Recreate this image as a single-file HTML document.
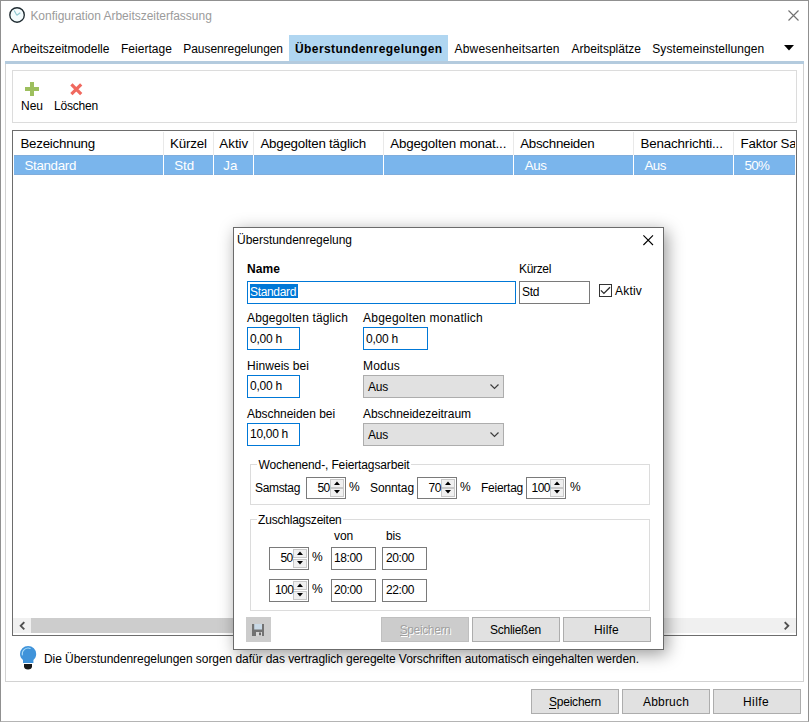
<!DOCTYPE html>
<html><head><meta charset="utf-8"><title>Konfiguration Arbeitszeiterfassung</title>
<style>
html,body{margin:0;padding:0;}
body{width:809px;height:722px;position:relative;overflow:hidden;background:#fff;font-family:'Liberation Sans', sans-serif;font-size:12px;color:#000;}
.t{position:absolute;white-space:pre;}
.b{position:absolute;box-sizing:border-box;}
svg{position:absolute;overflow:visible;}

.btn{background:#e1e1e1;border:1px solid #adadad;}
.inp{background:#fff;border:1px solid #7a7a7a;}
.inpf{background:#fff;border:1px solid #0078d7;}
.cmb{background:#e1e1e1;border:1px solid #adadad;}
.grp{border:1px solid #dcdcdc;}
.spb{background:#f0f0f0;border:1px solid #c8c8c8;}

</style></head><body>
<div class="b " style="left:0px;top:0px;width:809px;height:722px;border:1px solid #909090;border-bottom-color:#b4b4b4;"></div>
<div class="b " style="left:289px;top:35px;width:159px;height:27px;background:#b0d6f1;"></div>
<div class="b " style="left:5px;top:61px;width:799px;height:621px;border:1px solid #d2d2d2;"></div>
<div class="b " style="left:5px;top:61px;width:799px;height:3px;background:#b4cbde;"></div>
<div class="b " style="left:12px;top:70px;width:785px;height:53px;border:1px solid #dcdcdc;"></div>
<svg style="left:25px;top:82px" width="14" height="14"><path d="M5 0h4v5h5v4h-5v5h-4v-5h-5v-4h5z" fill="#9dbf5e"/></svg>
<svg style="left:69.700px;top:82.600px" width="12.600" height="12.600"><path d="M1.400 1.400L11.200 11.200M11.200 1.400L1.400 11.200" stroke="#f0695f" stroke-width="3.200" stroke-linecap="butt" fill="none"/></svg>
<div class="b " style="left:12px;top:130px;width:785px;height:506px;border:1px solid #6d6d6d;background:#fff;"></div>
<div class="b " style="left:14px;top:155px;width:781px;height:20px;background:#7ab5ec;border-top:1px solid #80addb;border-bottom:1px solid #80addb;"></div>
<div class="b " style="left:163px;top:132px;width:1px;height:23px;background:#e9e9e9;"></div>
<div class="b " style="left:163px;top:155px;width:1px;height:20px;background:#fff;"></div>
<div class="b " style="left:213px;top:132px;width:1px;height:23px;background:#e9e9e9;"></div>
<div class="b " style="left:213px;top:155px;width:1px;height:20px;background:#fff;"></div>
<div class="b " style="left:253px;top:132px;width:1px;height:23px;background:#e9e9e9;"></div>
<div class="b " style="left:253px;top:155px;width:1px;height:20px;background:#fff;"></div>
<div class="b " style="left:383px;top:132px;width:1px;height:23px;background:#e9e9e9;"></div>
<div class="b " style="left:383px;top:155px;width:1px;height:20px;background:#fff;"></div>
<div class="b " style="left:513px;top:132px;width:1px;height:23px;background:#e9e9e9;"></div>
<div class="b " style="left:513px;top:155px;width:1px;height:20px;background:#fff;"></div>
<div class="b " style="left:633px;top:132px;width:1px;height:23px;background:#e9e9e9;"></div>
<div class="b " style="left:633px;top:155px;width:1px;height:20px;background:#fff;"></div>
<div class="b " style="left:733px;top:132px;width:1px;height:23px;background:#e9e9e9;"></div>
<div class="b " style="left:733px;top:155px;width:1px;height:20px;background:#fff;"></div>
<div class="b " style="left:13px;top:618px;width:783px;height:15px;background:#f0f0f0;"></div>
<div class="b " style="left:31px;top:618px;width:610px;height:15px;background:#cdcdcd;"></div>
<svg style="left:18px;top:621px" width="8" height="10"><path d="M6.300 1.200L2.700 4.800L6.300 8.400" stroke="#505050" stroke-width="1.900" fill="none"/></svg>
<svg style="left:782px;top:621px" width="8" height="10"><path d="M2.700 1.200L6.300 4.800L2.700 8.400" stroke="#505050" stroke-width="1.900" fill="none"/></svg>
<svg style="left:19px;top:645px" width="18" height="26" viewBox="0 0 18 26"><path d="M9.100 1a8.100 8.100 0 0 0-8.100 8.100c0 2.600 1.300 4.400 3 6v2.800h10.400v-2.800c1.700-1.600 2.800-3.400 2.800-6a8.100 8.100 0 0 0-8.100-8.100z" fill="#3f93da"/><path d="M5 18.900h8v2.700c0 1.800-1.700 3-4 3s-4-1.200-4-3z" fill="#1a1a1a"/><path d="M3.300 9.900a6 6 0 0 1 7.900-6.500" stroke="#a9dcf9" stroke-width="1.100" fill="none" stroke-linecap="round"/></svg>
<div class="b btn" style="left:531px;top:689px;width:88px;height:25px;"></div>
<div class="b btn" style="left:622px;top:689px;width:88px;height:25px;"></div>
<div class="b btn" style="left:713px;top:689px;width:88px;height:25px;"></div>
<div class="b " style="left:549px;top:708px;width:7px;height:1px;background:#000;"></div>
<svg style="left:788px;top:10px" width="11" height="11"><path d="M0.500 0.500L10.500 10.500M10.500 0.500L0.500 10.500" stroke="#727272" stroke-width="1.150" fill="none"/></svg>
<svg style="left:784px;top:45px" width="10" height="6"><path d="M0 0h10L5 5.500z" fill="#000"/></svg>
<svg style="left:8px;top:6px" width="18" height="18" viewBox="0 0 18 18"><circle cx="9.050" cy="8.950" r="7.250" fill="#f3fbfd" stroke="#1f2b31" stroke-width="1.350"/><path d="M8.800 9.300L6.200 4.600M8.800 9.300L12.300 6.800" stroke="#8cc6d0" stroke-width="1.100" fill="none"/></svg>
<span class="t" style="left:30.4px;top:9.24px;font-size:12px;line-height:14px;color:#9b9b9b;letter-spacing:-0.021px;">Konfiguration Arbeitszeiterfassung</span><span class="t" style="left:11.4px;top:41.84px;font-size:12px;line-height:14px;">Arbeitszeitmodelle</span><span class="t" style="left:121.0px;top:41.84px;font-size:12px;line-height:14px;letter-spacing:0.033px;">Feiertage</span><span class="t" style="left:183.3px;top:41.84px;font-size:12px;line-height:14px;letter-spacing:-0.067px;">Pausenregelungen</span><span class="t" style="left:295.0px;top:41.84px;font-size:12px;line-height:14px;font-weight:700;letter-spacing:0.420px;">Überstundenregelungen</span><span class="t" style="left:454.6px;top:41.84px;font-size:12px;line-height:14px;letter-spacing:0.172px;">Abwesenheitsarten</span><span class="t" style="left:571.5px;top:41.84px;font-size:12px;line-height:14px;letter-spacing:0.010px;">Arbeitsplätze</span><span class="t" style="left:652.3px;top:41.84px;font-size:12px;line-height:14px;letter-spacing:0.061px;">Systemeinstellungen</span><span class="t" style="left:21.0px;top:98.84px;font-size:12px;line-height:14px;letter-spacing:-0.005px;">Neu</span><span class="t" style="left:54.0px;top:98.84px;font-size:12px;line-height:14px;letter-spacing:-0.196px;">Löschen</span><span class="t" style="left:20.4px;top:135.72px;font-size:13.33px;line-height:15.33px;letter-spacing:-0.225px;">Bezeichnung</span><span class="t" style="left:170.0px;top:135.72px;font-size:13.33px;line-height:15.33px;letter-spacing:-0.180px;">Kürzel</span><span class="t" style="left:219.3px;top:135.72px;font-size:13.33px;line-height:15.33px;letter-spacing:0.022px;">Aktiv</span><span class="t" style="left:260.4px;top:135.72px;font-size:13.33px;line-height:15.33px;letter-spacing:-0.226px;">Abgegolten täglich</span><span class="t" style="left:390.2px;top:135.72px;font-size:13.33px;line-height:15.33px;letter-spacing:-0.174px;">Abgegolten monat...</span><span class="t" style="left:520.2px;top:135.72px;font-size:13.33px;line-height:15.33px;letter-spacing:-0.271px;">Abschneiden</span><span class="t" style="left:640.6px;top:135.72px;font-size:13.33px;line-height:15.33px;letter-spacing:-0.157px;">Benachrichti...</span><span class="t" style="left:740.6px;top:135.72px;font-size:13.33px;line-height:15.33px;letter-spacing:-0.209px;width:54.4px;overflow:hidden;">Faktor Sa</span><span class="t" style="left:24.5px;top:157.72px;font-size:13.33px;line-height:15.33px;color:#fff;letter-spacing:-0.324px;">Standard</span><span class="t" style="left:174.3px;top:157.72px;font-size:13.33px;line-height:15.33px;color:#fff;letter-spacing:-0.105px;">Std</span><span class="t" style="left:223.3px;top:157.72px;font-size:13.33px;line-height:15.33px;color:#fff;letter-spacing:-0.039px;">Ja</span><span class="t" style="left:524.8px;top:157.72px;font-size:13.33px;line-height:15.33px;color:#fff;letter-spacing:-0.390px;">Aus</span><span class="t" style="left:644.4px;top:157.72px;font-size:13.33px;line-height:15.33px;color:#fff;letter-spacing:-0.456px;">Aus</span><span class="t" style="left:744.5px;top:157.72px;font-size:13.33px;line-height:15.33px;color:#fff;letter-spacing:-0.600px;">50%</span><span class="t" style="left:44.0px;top:651.84px;font-size:12px;line-height:14px;letter-spacing:-0.062px;">Die Überstundenregelungen sorgen dafür das vertraglich geregelte Vorschriften automatisch eingehalten werden.</span><span class="t" style="left:549.0px;top:694.84px;font-size:12px;line-height:14px;letter-spacing:-0.227px;">Speichern</span><span class="t" style="left:643.0px;top:694.84px;font-size:12px;line-height:14px;letter-spacing:0.185px;">Abbruch</span><span class="t" style="left:743.0px;top:694.84px;font-size:12px;line-height:14px;letter-spacing:0.397px;">Hilfe</span>
<div class="b " style="left:233px;top:227px;width:431px;height:423px;background:#fff;border:1px solid #6b6b6b;box-shadow:3px 4px 16px 0 rgba(0,0,0,0.40);"></div>
<svg style="left:643px;top:235px" width="11" height="11"><path d="M0.400 0.400L10 10M10 0.400L0.400 10" stroke="#000" stroke-width="1.100" fill="none"/></svg>
<div class="b inpf" style="left:247px;top:281px;width:269px;height:23px;"></div>
<div class="b " style="left:250px;top:284px;width:48px;height:14px;background:#0078d7;"></div>
<div class="b inp" style="left:519px;top:281px;width:71px;height:23px;"></div>
<div class="b " style="left:599px;top:284px;width:13px;height:13px;background:#fff;border:1px solid #333;"></div>
<svg style="left:599px;top:284px" width="13" height="13"><path d="M1.900 6.400L4.900 9.400L11 3.200" stroke="#2a2a2a" stroke-width="1.300" fill="none"/></svg>
<div class="b inpf" style="left:247px;top:327px;width:53px;height:23px;"></div>
<div class="b inpf" style="left:363px;top:327px;width:65px;height:23px;"></div>
<div class="b inpf" style="left:247px;top:375px;width:53px;height:23px;"></div>
<div class="b inpf" style="left:247px;top:423px;width:53px;height:23px;"></div>
<div class="b cmb" style="left:363px;top:375px;width:141px;height:23px;"></div>
<svg style="left:490px;top:384px" width="9" height="6"><path d="M0.500 0.500L4.500 4.500L8.500 0.500" stroke="#3c3c3c" stroke-width="1.150" fill="none"/></svg>
<div class="b cmb" style="left:363px;top:423px;width:141px;height:23px;"></div>
<svg style="left:490px;top:432px" width="9" height="6"><path d="M0.500 0.500L4.500 4.500L8.500 0.500" stroke="#3c3c3c" stroke-width="1.150" fill="none"/></svg>
<div class="b grp" style="left:250px;top:464px;width:400px;height:41px;"></div>
<div class="b " style="left:257px;top:460px;width:154px;height:13px;background:#fff;"></div>
<div class="b grp" style="left:250px;top:519px;width:400px;height:92px;"></div>
<div class="b " style="left:257px;top:515px;width:86px;height:13px;background:#fff;"></div>
<div class="b inp" style="left:306px;top:477px;width:40px;height:22px;"></div><div class="b spb" style="left:330px;top:479px;width:14px;height:9px;"></div><div class="b spb" style="left:330px;top:488px;width:14px;height:9px;"></div><svg style="left:334px;top:481px" width="6" height="4"><path d="M0 4L3 0.500L6 4z" fill="#000"/></svg><svg style="left:334px;top:490px" width="6" height="4"><path d="M0 0L3 3.500L6 0z" fill="#000"/></svg>
<div class="b inp" style="left:417px;top:477px;width:40px;height:22px;"></div><div class="b spb" style="left:441px;top:479px;width:14px;height:9px;"></div><div class="b spb" style="left:441px;top:488px;width:14px;height:9px;"></div><svg style="left:445px;top:481px" width="6" height="4"><path d="M0 4L3 0.500L6 4z" fill="#000"/></svg><svg style="left:445px;top:490px" width="6" height="4"><path d="M0 0L3 3.500L6 0z" fill="#000"/></svg>
<div class="b inp" style="left:526px;top:477px;width:40px;height:22px;"></div><div class="b spb" style="left:550px;top:479px;width:14px;height:9px;"></div><div class="b spb" style="left:550px;top:488px;width:14px;height:9px;"></div><svg style="left:554px;top:481px" width="6" height="4"><path d="M0 4L3 0.500L6 4z" fill="#000"/></svg><svg style="left:554px;top:490px" width="6" height="4"><path d="M0 0L3 3.500L6 0z" fill="#000"/></svg>
<div class="b inp" style="left:269px;top:547px;width:40px;height:23px;"></div><div class="b spb" style="left:293px;top:549px;width:14px;height:9px;"></div><div class="b spb" style="left:293px;top:559px;width:14px;height:9px;"></div><svg style="left:297px;top:551px" width="6" height="4"><path d="M0 4L3 0.500L6 4z" fill="#000"/></svg><svg style="left:297px;top:561px" width="6" height="4"><path d="M0 0L3 3.500L6 0z" fill="#000"/></svg>
<div class="b inp" style="left:269px;top:579px;width:40px;height:23px;"></div><div class="b spb" style="left:293px;top:581px;width:14px;height:9px;"></div><div class="b spb" style="left:293px;top:591px;width:14px;height:9px;"></div><svg style="left:297px;top:583px" width="6" height="4"><path d="M0 4L3 0.500L6 4z" fill="#000"/></svg><svg style="left:297px;top:593px" width="6" height="4"><path d="M0 0L3 3.500L6 0z" fill="#000"/></svg>
<div class="b inp" style="left:331px;top:547px;width:45px;height:23px;"></div>
<div class="b inp" style="left:382px;top:547px;width:45px;height:23px;"></div>
<div class="b inp" style="left:331px;top:579px;width:45px;height:23px;"></div>
<div class="b inp" style="left:382px;top:579px;width:45px;height:23px;"></div>
<div class="b " style="left:246px;top:617px;width:25px;height:25px;background:#cccccc;"></div>
<svg style="left:252px;top:624px" width="12" height="12"><path d="M0 0h12v12h-12z" fill="#727272"/><path d="M2.200 0h7.800v5.500h-7.800z" fill="#c9d9e6"/><path d="M4 8h6v4h-6z" fill="#d6d6d6"/><path d="M7 8.500h2v2.800h-2z" fill="#6a6a6a"/></svg>
<div class="b " style="left:381px;top:617px;width:88px;height:25px;background:#cccccc;border:1px solid #bfbfbf;"></div>
<div class="b " style="left:400px;top:635px;width:7px;height:1px;background:#a0a0a0;box-shadow:1px 1px 0 #fff;"></div>
<div class="b btn" style="left:472px;top:617px;width:88px;height:25px;"></div>
<div class="b btn" style="left:563px;top:617px;width:88px;height:25px;"></div>
<span class="t" style="left:237.0px;top:232.84px;font-size:12px;line-height:14px;letter-spacing:-0.022px;">Überstundenregelung</span><span class="t" style="left:247.0px;top:261.84px;font-size:12px;line-height:14px;font-weight:700;letter-spacing:0.078px;">Name</span><span class="t" style="left:519.0px;top:261.84px;font-size:12px;line-height:14px;letter-spacing:-0.336px;">Kürzel</span><span class="t" style="left:250.0px;top:284.84px;font-size:12px;line-height:14px;color:#fff;letter-spacing:-0.338px;">Standard</span><span class="t" style="left:522.0px;top:284.84px;font-size:12px;line-height:14px;letter-spacing:-0.339px;">Std</span><span class="t" style="left:615.0px;top:283.84px;font-size:12px;line-height:14px;letter-spacing:0.197px;">Aktiv</span><span class="t" style="left:247.0px;top:310.84px;font-size:12px;line-height:14px;letter-spacing:0.125px;">Abgegolten täglich</span><span class="t" style="left:363.0px;top:310.84px;font-size:12px;line-height:14px;letter-spacing:0.229px;">Abgegolten monatlich</span><span class="t" style="left:250.0px;top:331.84px;font-size:12px;line-height:14px;letter-spacing:-0.229px;">0,00 h</span><span class="t" style="left:366.0px;top:331.84px;font-size:12px;line-height:14px;letter-spacing:-0.229px;">0,00 h</span><span class="t" style="left:247.0px;top:358.84px;font-size:12px;line-height:14px;letter-spacing:0.058px;">Hinweis bei</span><span class="t" style="left:363.0px;top:358.84px;font-size:12px;line-height:14px;letter-spacing:0.194px;">Modus</span><span class="t" style="left:250.0px;top:378.84px;font-size:12px;line-height:14px;letter-spacing:-0.229px;">0,00 h</span><span class="t" style="left:368.0px;top:379.84px;font-size:12px;line-height:14px;letter-spacing:-0.229px;">Aus</span><span class="t" style="left:247.0px;top:406.84px;font-size:12px;line-height:14px;letter-spacing:-0.049px;">Abschneiden bei</span><span class="t" style="left:363.0px;top:406.84px;font-size:12px;line-height:14px;letter-spacing:-0.041px;">Abschneidezeitraum</span><span class="t" style="left:250.0px;top:426.84px;font-size:12px;line-height:14px;letter-spacing:-0.292px;">10,00 h</span><span class="t" style="left:368.0px;top:427.84px;font-size:12px;line-height:14px;letter-spacing:-0.229px;">Aus</span><span class="t" style="left:258.5px;top:457.84px;font-size:12px;line-height:14px;letter-spacing:-0.131px;">Wochenend-, Feiertagsarbeit</span><span class="t" style="left:255.0px;top:480.84px;font-size:12px;line-height:14px;letter-spacing:-0.337px;">Samstag</span><span class="t" style="left:317.4px;top:480.84px;font-size:12px;line-height:14px;letter-spacing:-0.600px;">50</span><span class="t" style="left:349.0px;top:479.84px;font-size:12px;line-height:14px;">%</span><span class="t" style="left:370.0px;top:480.84px;font-size:12px;line-height:14px;letter-spacing:-0.103px;">Sonntag</span><span class="t" style="left:428.6px;top:480.84px;font-size:12px;line-height:14px;letter-spacing:-0.600px;">70</span><span class="t" style="left:460.0px;top:479.84px;font-size:12px;line-height:14px;">%</span><span class="t" style="left:481.0px;top:480.84px;font-size:12px;line-height:14px;letter-spacing:-0.254px;">Feiertag</span><span class="t" style="left:531.6px;top:480.84px;font-size:12px;line-height:14px;letter-spacing:-0.600px;">100</span><span class="t" style="left:570.0px;top:479.84px;font-size:12px;line-height:14px;">%</span><span class="t" style="left:258.1px;top:512.84px;font-size:12px;line-height:14px;letter-spacing:-0.215px;">Zuschlagszeiten</span><span class="t" style="left:334.0px;top:528.84px;font-size:12px;line-height:14px;letter-spacing:-0.120px;">von</span><span class="t" style="left:386.0px;top:528.84px;font-size:12px;line-height:14px;letter-spacing:-0.115px;">bis</span><span class="t" style="left:280.4px;top:550.84px;font-size:12px;line-height:14px;letter-spacing:-0.600px;">50</span><span class="t" style="left:312.0px;top:549.84px;font-size:12px;line-height:14px;">%</span><span class="t" style="left:334.0px;top:550.84px;font-size:12px;line-height:14px;letter-spacing:-0.406px;">18:00</span><span class="t" style="left:386.0px;top:550.84px;font-size:12px;line-height:14px;letter-spacing:-0.406px;">20:00</span><span class="t" style="left:275.0px;top:582.84px;font-size:12px;line-height:14px;letter-spacing:-0.600px;">100</span><span class="t" style="left:312.0px;top:581.84px;font-size:12px;line-height:14px;">%</span><span class="t" style="left:334.0px;top:582.84px;font-size:12px;line-height:14px;letter-spacing:-0.406px;">20:00</span><span class="t" style="left:386.0px;top:582.84px;font-size:12px;line-height:14px;letter-spacing:-0.406px;">22:00</span><span class="t" style="left:399.7px;top:622.84px;font-size:12px;line-height:14px;color:#a0a0a0;letter-spacing:-0.372px;text-shadow:1px 1px 0 #fff;">Speichern</span><span class="t" style="left:490.0px;top:622.84px;font-size:12px;line-height:14px;letter-spacing:-0.264px;">Schließen</span><span class="t" style="left:594.0px;top:622.84px;font-size:12px;line-height:14px;letter-spacing:0.197px;">Hilfe</span>

</body></html>
